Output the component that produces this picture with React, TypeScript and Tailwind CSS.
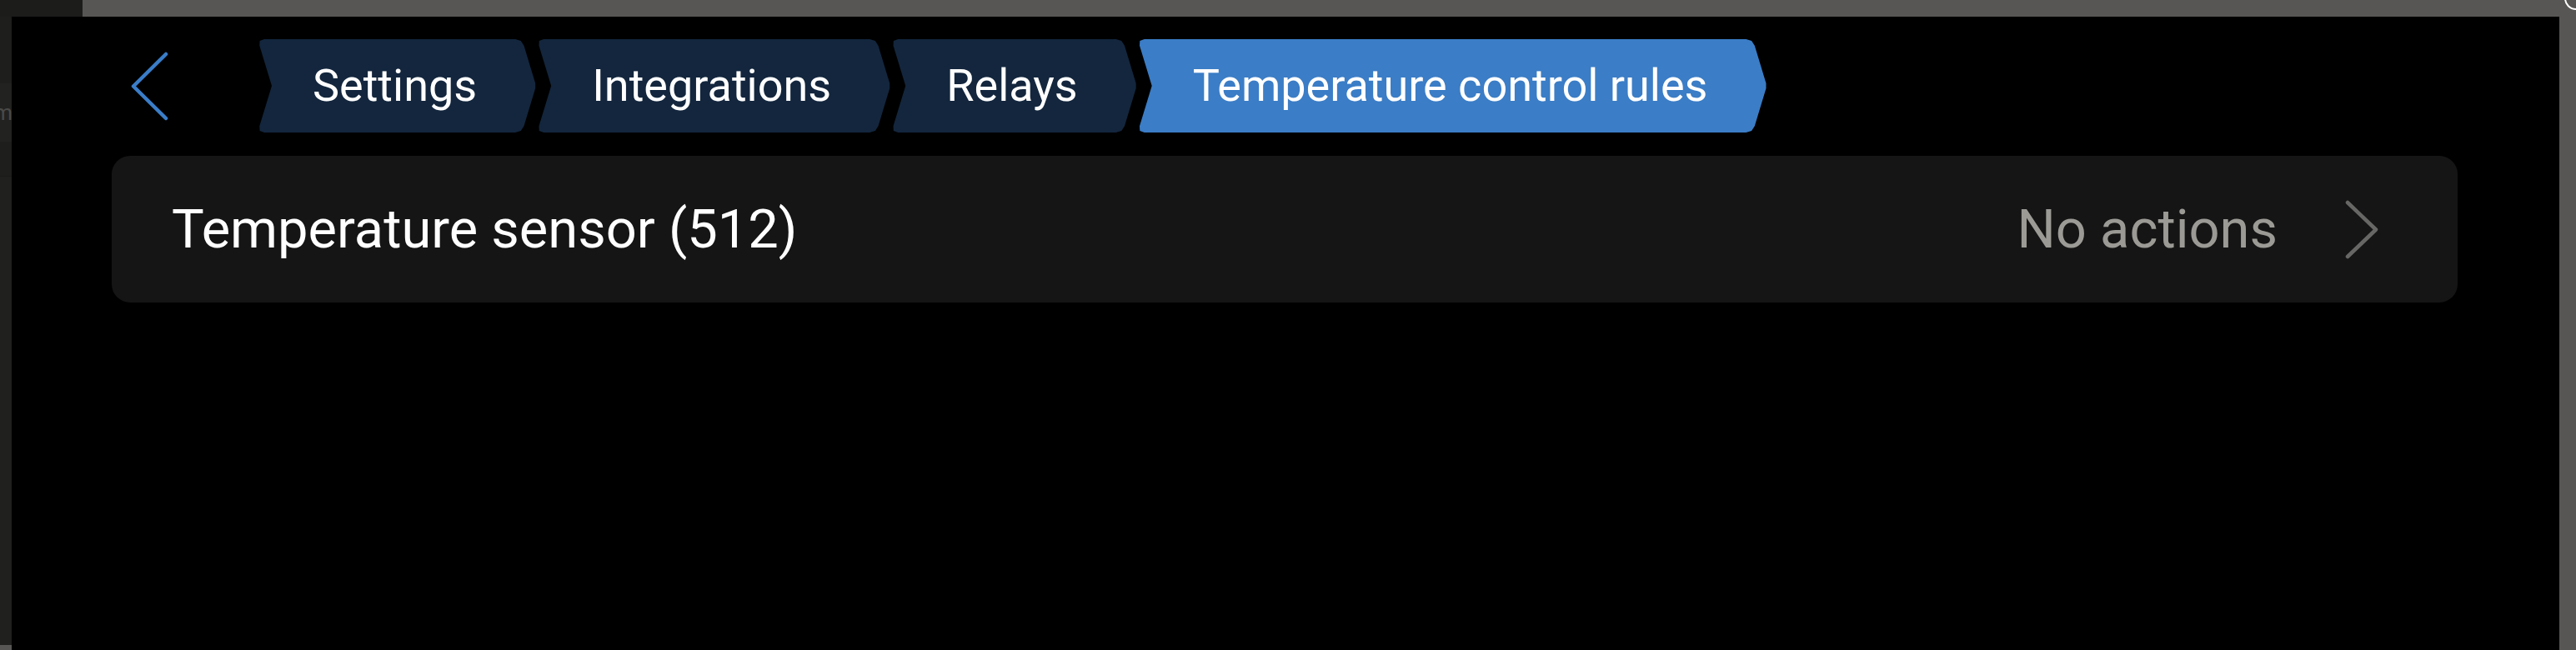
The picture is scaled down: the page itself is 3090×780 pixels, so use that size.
import React from 'react';

type Crumb = {
  label: string;
  active?: boolean;
};

const crumbs: Crumb[] = [
  { label: 'Settings' },
  { label: 'Integrations' },
  { label: 'Relays' },
  { label: 'Temperature control rules', active: true },
];

// chevron shape with a notch on the left, point on the right, softened corners
const crumbShape =
  '[clip-path:polygon(2.3px_7.7px,2.6px_2px,8px_0,calc(100%_-_25px)_0,calc(100%_-_18.4px)_1.9px,calc(100%_-_14.7px)_7.7px,calc(100%_-_1px)_calc(50%_-_3px),calc(100%_-_1px)_calc(50%_+_3px),calc(100%_-_14.7px)_calc(100%_-_7.7px),calc(100%_-_18.4px)_calc(100%_-_1.9px),calc(100%_-_25px)_100%,8px_100%,2.6px_calc(100%_-_2px),2.3px_calc(100%_-_7.7px),17px_50%)]';

const BackButton: React.FC = () => (
  <button className="flex items-center justify-center w-[46px] h-[85px]">
    <svg width="46" height="85" viewBox="0 0 46 85" fill="none">
      <path
        d="M43 4 L4 42.5 L43 81"
        stroke="#3a7dc8"
        strokeWidth="4.5"
        strokeLinecap="round"
        strokeLinejoin="round"
      />
    </svg>
  </button>
);

const Breadcrumbs: React.FC = () => (
  <div className="flex items-center gap-[1px]">
    {crumbs.map((c) => (
      <div
        key={c.label}
        className={`${crumbShape} h-[112px] flex items-center pl-[66px] pr-[71px] text-[54px] leading-none text-white whitespace-nowrap ${
          c.active ? 'bg-[#3b7dc6]' : 'bg-[#13263d]'
        }`}
      >
        {c.label}
      </div>
    ))}
  </div>
);

const RuleRow: React.FC<{ name: string; summary: string }> = ({ name, summary }) => (
  <div className="ml-[120px] mr-[122px] mt-[28px] h-[176px] rounded-[22px] bg-[#151515] flex items-center pl-[72px] pr-[92px]">
    <span className="text-[65px] leading-none text-white whitespace-nowrap">{name}</span>
    <div className="ml-auto flex items-center">
      <span className="text-[65px] leading-none text-[#9b9a95] whitespace-nowrap">{summary}</span>
      <svg className="ml-[80px]" width="44" height="73" viewBox="0 0 44 73" fill="none">
        <path
          d="M4 4 L38 36.5 L4 69"
          stroke="#676765"
          strokeWidth="4.5"
          strokeLinecap="round"
          strokeLinejoin="round"
        />
      </svg>
    </div>
  </div>
);

export default function App() {
  return (
    <div className="relative w-[3090px] h-[780px] overflow-hidden bg-[#575654] flex flex-col [font-family:Roboto,'Noto_Sans',sans-serif]">
      {/* window chrome, top */}
      <div className="h-[20px] flex shrink-0">
        <div className="w-[99px] bg-[#1c1c1b]" />
        <div className="flex-1" />
      </div>
      <div className="absolute right-[-14px] top-[-16px] w-[28px] h-[28px] rounded-full border-2 border-white" />

      <div className="flex flex-1 min-h-0">
        {/* sidebar edge peeking in */}
        <div className="w-[14px] flex flex-col bg-[#1e1e1d] overflow-hidden">
          <div className="h-[80px]" />
          <div className="h-[70px] bg-[#222221] flex items-center justify-end overflow-hidden">
            <span className="text-[26px] leading-none text-[#4a4a48] -mr-[1px]">m</span>
          </div>
          <div className="h-[42px] border-b border-[#1a1a19]" />
          <div className="flex-1 bg-[#20201f]" />
          <div className="h-[6px] bg-[#575654]" />
        </div>

        {/* main panel */}
        <div className="flex-1 bg-black pt-[27px]">
          <div className="flex items-center h-[112px] pl-[142px]">
            <BackButton />
            <div className="ml-[107px]">
              <Breadcrumbs />
            </div>
          </div>
          <RuleRow name="Temperature sensor (512)" summary="No actions" />
        </div>

        <div className="w-[20px]" />
      </div>
    </div>
  );
}
